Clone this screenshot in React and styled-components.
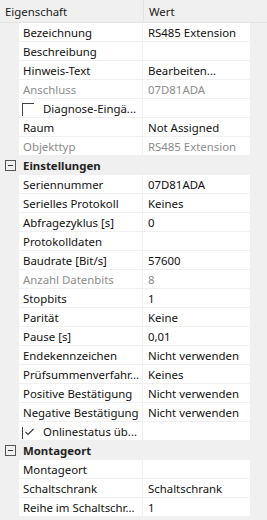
import React from "react";
import styled, { createGlobalStyle } from "styled-components";

const Global = createGlobalStyle`
  html, body { margin: 0; padding: 0; background: #f0f0f0; }
  body { font-family: "Noto Sans", "Segoe UI", sans-serif; font-size: 11.4px; color: #000; }
`;

const Grid = styled.div`
  width: 267px;
  height: 520px;
  background: #f0f0f0;
  display: flex;
  flex-direction: column;
  overflow: hidden;
`;

const Header = styled.div`
  display: grid;
  grid-template-columns: 143px 1fr;
  height: 22px;
  border-bottom: 1px solid #e3e3e3;
  background: #f0f0f0;
`;

const HeaderCell = styled.div`
  display: flex;
  align-items: center;
  padding-left: ${(p) => p.$pad}px;
  color: #1a1a1a;
  border-left: ${(p) => (p.$divider ? "1px solid #e3e3e3" : "none")};
`;

const Row = styled.div`
  display: grid;
  grid-template-columns: 19px 123px 1px 107px 17px;
  height: 19px;
`;

const Gutter = styled.div`
  background: #f0f0f0;
`;

const Cell = styled.div`
  background: #fff;
  border-bottom: 1px solid #f0f0f0;
  display: flex;
  align-items: center;
  padding-left: ${(p) => p.$pad}px;
  white-space: nowrap;
  overflow: hidden;
  color: ${(p) => (p.$disabled ? "#8c8c8c" : "#111")};
`;

const Divider = styled.div`
  background: #f0f0f0;
`;

const CategoryRow = styled.div`
  display: grid;
  grid-template-columns: 19px 1fr;
  height: 19px;
  background: #f0f0f0;
  align-items: center;
`;

const Toggle = styled.div`
  width: 9px;
  height: 9px;
  border: 1px solid #555;
  margin-left: 5px;
  position: relative;
  &::after {
    content: "";
    position: absolute;
    left: 2px;
    top: 4px;
    width: 5px;
    height: 1px;
    background: #333;
  }
`;

const CategoryLabel = styled.div`
  font-weight: 700;
  color: #222;
  padding-left: 4px;
`;

const Check = styled.span`
  display: inline-block;
  flex: none;
  width: 11px;
  height: 12px;
  border-left: 1px solid #444;
  border-top: ${(p) => (p.$checked ? "none" : "1px solid #444")};
  margin-right: 9px;
  margin-top: ${(p) => (p.$checked ? "5px" : "4px")};
  position: relative;
  align-self: flex-start;
`;

const CheckMark = styled.svg`
  position: absolute;
  left: 2px;
  top: 1px;
`;

const rows1 = [
  { n: "Bezeichnung", v: "RS485 Extension" },
  { n: "Beschreibung", v: "" },
  { n: "Hinweis-Text", v: "Bearbeiten..." },
  { n: "Anschluss", v: "07D81ADA", d: true },
  { n: "Diagnose-Eingä...", v: "", cb: "off" },
  { n: "Raum", v: "Not Assigned" },
  { n: "Objekttyp", v: "RS485 Extension", d: true },
];

const rows2 = [
  { n: "Seriennummer", v: "07D81ADA" },
  { n: "Serielles Protokoll", v: "Keines" },
  { n: "Abfragezyklus [s]", v: "0" },
  { n: "Protokolldaten", v: "" },
  { n: "Baudrate [Bit/s]", v: "57600" },
  { n: "Anzahl Datenbits", v: "8", d: true },
  { n: "Stopbits", v: "1" },
  { n: "Parität", v: "Keine" },
  { n: "Pause [s]", v: "0,01" },
  { n: "Endekennzeichen", v: "Nicht verwenden" },
  { n: "Prüfsummenverfahr...", v: "Keines" },
  { n: "Positive Bestätigung", v: "Nicht verwenden" },
  { n: "Negative Bestätigung", v: "Nicht verwenden" },
  { n: "Onlinestatus üb...", v: "", cb: "on" },
];

const rows3 = [
  { n: "Montageort", v: "" },
  { n: "Schaltschrank", v: "Schaltschrank" },
  { n: "Reihe im Schaltschr...", v: "1" },
];

function PropRow({ r }) {
  return (
    <Row>
      <Gutter />
      <Cell $pad={r.cb ? 3 : 4} $disabled={r.d}>
        {r.cb && (
          <Check $checked={r.cb === "on"}>
            {r.cb === "on" && (
              <CheckMark width="9" height="8" viewBox="0 0 9 8">
                <path d="M0.5 4 L3 6.5 L8.5 1" fill="none" stroke="#333" strokeWidth="1.1" />
              </CheckMark>
            )}
          </Check>
        )}
        {r.n}
      </Cell>
      <Divider />
      <Cell $pad={5} $disabled={r.d}>{r.v}</Cell>
      <Gutter />
    </Row>
  );
}

function Category({ label }) {
  return (
    <CategoryRow>
      <Toggle />
      <CategoryLabel>{label}</CategoryLabel>
    </CategoryRow>
  );
}

export default function App() {
  return (
    <>
      <Global />
      <Grid>
        <Header>
          <HeaderCell $pad={5}>Eigenschaft</HeaderCell>
          <HeaderCell $pad={5} $divider>Wert</HeaderCell>
        </Header>
        {rows1.map((r) => <PropRow key={r.n} r={r} />)}
        <Category label="Einstellungen" />
        {rows2.map((r) => <PropRow key={r.n} r={r} />)}
        <Category label="Montageort" />
        {rows3.map((r) => <PropRow key={r.n} r={r} />)}
      </Grid>
    </>
  );
}
